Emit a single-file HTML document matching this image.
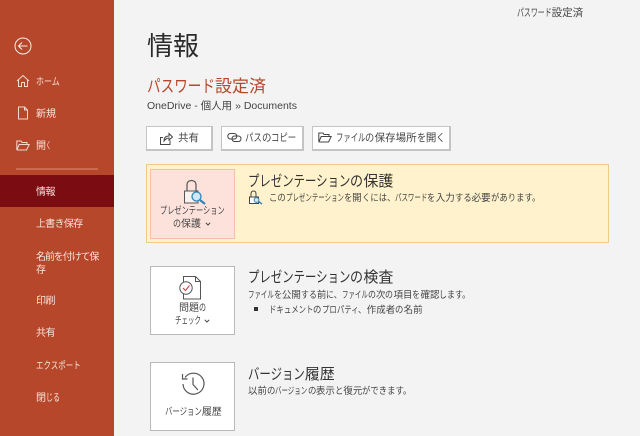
<!DOCTYPE html>
<html lang="ja"><head><meta charset="utf-8"><style>
html,body{margin:0;padding:0}
body{--ks:.68;--gs:.88;width:640px;height:436px;position:relative;overflow:hidden;background:#f3f3f3;font-family:"Liberation Sans","Noto Sans CJK JP",sans-serif;color:#444}
div,svg{position:absolute;box-sizing:border-box}
i{display:inline-block;font-style:normal;transform-origin:0 50%;transform:scaleX(var(--s));margin-right:calc((var(--s) - 1)*var(--n)*1em)}
i.k{--s:var(--ks)}
i.g{--s:var(--gs)}
.t{white-space:nowrap;line-height:1}
.n{color:#f6e3dc;font-size:10px;left:36px;line-height:1;white-space:nowrap}
.b{background:#fff;border:1px solid #c4c4c4;border-bottom-width:2px;border-right-width:2px}
.c{background:#fff;border:1px solid #b9b9b9;left:150px;width:85px;height:69px}
.h{--ks:.76;--gs:.87;left:248px;font-size:15px;color:#333;white-space:nowrap;line-height:1}
.s{font-size:9.5px;color:#444;white-space:nowrap;line-height:1}
</style></head><body>
<div style="left:0;top:0;width:114px;height:436px;background:#b7472a"></div>
<div style="left:0;top:175px;width:114px;height:32px;background:#7b0c12"></div>
<div style="left:16px;top:168px;width:82px;height:2px;background:#cc6a50"></div>
<svg style="left:14px;top:37px" width="18" height="18" viewBox="0 0 18 18" fill="none" stroke="#fbeee9" stroke-width="1"><circle cx="9" cy="9" r="8"/><path d="M13.5 9H4.5M8 5.5L4.5 9L8 12.5"/></svg>
<svg style="left:16px;top:74px" width="14" height="14" viewBox="0 0 14 14" fill="none" stroke="#f3d9d0" stroke-width="1"><path d="M1 7L7 1.5L13 7M2.5 6V12.5H5.5V8.5H8.5V12.5H11.5V6"/></svg>
<svg style="left:17px;top:106px" width="12" height="14" viewBox="0 0 12 14" fill="none" stroke="#f3d9d0" stroke-width="1"><path d="M1.5 1H7.5L10.5 4V13H1.5ZM7.5 1V4H10.5"/></svg>
<svg style="left:16px;top:140px" width="14" height="11" viewBox="0 0 14 11" fill="none" stroke="#f3d9d0" stroke-width="1"><path d="M.8 10V1H5L6 2.5H11V4.5M.8 10H10.5L13.2 4.5H3.2L.8 10"/></svg>
<div class="n" style="top:78px;--ks:.8"><i class="k" style="--n:3">ホーム</i></div>
<div class="n" style="top:110px">新規</div>
<div class="n" style="top:142px;--gs:.5">開<i class="g" style="--n:1">く</i></div>
<div class="n" style="top:188px;letter-spacing:-.5px">情報</div>
<div class="n" style="top:220px;letter-spacing:-.7px">上書き保存</div>
<div class="n" style="top:253px;letter-spacing:-1.1px">名前を付けて保</div>
<div class="n" style="top:266px">存</div>
<div class="n" style="top:297px;letter-spacing:-.5px">印刷</div>
<div class="n" style="top:329px;letter-spacing:-.5px">共有</div>
<div class="n" style="top:362px;--ks:.75"><i class="k" style="--n:6">エクスポート</i></div>
<div class="n" style="top:394px;--gs:.7">閉<i class="g" style="--n:2">じる</i></div>

<div class="t" style="left:517px;top:8px;font-size:10.5px;color:#444;--ks:.66"><i class="k" style="--n:5">パスワード</i>設定済</div>
<div class="t" style="left:147px;top:33px;font-size:26px;color:#2b2b2b">情報</div>
<div class="t" style="left:147px;top:78px;font-size:17px;color:#b7472a;--ks:.8"><i class="k" style="--n:5">パスワード</i>設定済</div>
<div class="t" style="left:147px;top:101px;font-size:10.5px;color:#444">OneDrive - 個人用 » Documents</div>

<div class="b" style="left:146px;top:126px;width:67px;height:25px"></div>
<div class="b" style="left:221px;top:126px;width:83px;height:25px"></div>
<div class="b" style="left:312px;top:126px;width:139px;height:25px"></div>
<svg style="left:159px;top:131px" width="14" height="15" viewBox="0 0 14 15" fill="none" stroke="#444" stroke-width="1"><path d="M4 13.5H1.5V6.5H4M1.5 13.5H11V9.5M5 10C5 6.5 7 5 10 5V2.5L13.5 6L10 9V7C8 7 6.5 8 5 10Z"/></svg>
<svg style="left:227px;top:132px" width="15" height="11" viewBox="0 0 15 11" fill="none" stroke="#444" stroke-width="1"><rect x=".8" y="1.5" width="9" height="5.5" rx="2.7"/><rect x="5" y="4" width="9" height="5.5" rx="2.7"/></svg>
<svg style="left:318px;top:132px" width="14" height="11" viewBox="0 0 14 11" fill="none" stroke="#444" stroke-width="1"><path d="M.8 10V1H5L6 2.5H11V4.5M.8 10H10.5L13.2 4.5H3.2L.8 10"/></svg>
<div class="s" style="left:178px;top:133px;font-size:10.5px">共有</div>
<div class="s" style="left:245px;top:133px;font-size:10.5px;--ks:.8;--gs:.9"><i class="k" style="--n:2">パス</i><i class="g" style="--n:1">の</i><i class="k" style="--n:3">コピー</i></div>
<div class="s" style="left:336px;top:133px;font-size:10.5px;--ks:.7;--gs:.88"><i class="k" style="--n:4">ファイル</i><i class="g" style="--n:1">の</i>保存場所<i class="g" style="--n:1">を</i>開<i class="g" style="--n:1">く</i></div>

<div style="left:146px;top:164px;width:463px;height:79px;background:#fff2cc;border:1px solid #efcb87"></div>
<div style="left:150px;top:169px;width:85px;height:70px;background:#fde2dc;border:1px solid #f6bfa8"></div>
<svg style="left:180px;top:178px" width="30" height="30" viewBox="0 0 30 30" fill="none"><path d="M7 13V7C7 4 9 2.500 11.500 2.500S16 4 16 7V13" stroke="#555" stroke-width="1.2"/><rect x="4.500" y="13" width="13.500" height="12" fill="#f7f2ee" stroke="#555"/><circle cx="16.500" cy="18.500" r="4.500" fill="#cfe8f5" stroke="#2f86bc" stroke-width="1.3"/><path d="M20 22L25 26" stroke="#2f86bc" stroke-width="2.200"/></svg>
<div class="s" style="left:160px;top:207px;font-size:10px;--ks:.72"><i class="k" style="--n:9">プレゼンテーション</i></div>
<div class="s" style="left:173px;top:220px;font-size:10px;--gs:.8"><i class="g" style="--n:1">の</i>保護</div>
<svg style="left:205px;top:222px" width="6" height="4" viewBox="0 0 6 4" fill="none" stroke="#444" stroke-width="1"><path d="M.8 .8L3 3L5.200 .8"/></svg>
<div class="h" style="top:174px"><i class="k" style="--n:9">プレゼンテーション</i><i class="g" style="--n:1">の</i>保護</div>
<svg style="left:248px;top:190px" width="15" height="15" viewBox="0 0 15 15" fill="none"><path d="M3 7V4C3 2 4 1 5.500 1S8 2 8 4V7" stroke="#444"/><rect x="1.500" y="7" width="9" height="6.500" fill="#fff" stroke="#444"/><circle cx="8.500" cy="10" r="2.400" fill="#cfe8f5" stroke="#2f86bc"/><path d="M10.500 11.500L14 14" stroke="#2f86bc" stroke-width="1.500"/></svg>
<div class="s" style="left:269px;top:194px"><i class="g" style="--n:2">この</i><i class="k" style="--n:9">プレゼンテーション</i><i class="g" style="--n:1">を</i>開<i class="g" style="--n:4">くには、</i><i class="k" style="--n:5">パスワード</i><i class="g" style="--n:1">を</i>入力<i class="g" style="--n:2">する</i>必要<i class="g" style="--n:6">があります。</i></div>

<div class="c" style="top:266px"></div>
<svg style="left:178px;top:275px" width="28" height="28" viewBox="0 0 28 28" fill="none"><path d="M5.500 1.500H17.500L22.500 6.500V24H5.500Z" fill="#fff" stroke="#555"/><path d="M17.500 1.500V6.500H22.500" stroke="#555"/><circle cx="8" cy="13" r="6.200" fill="#fff" stroke="#555"/><path d="M5 13L7.500 15.500L11.500 10.500" stroke="#d24a54" stroke-width="1.200"/></svg>
<div class="s" style="left:179px;top:304px;font-size:10px;--gs:.7">問題<i class="g" style="--n:1">の</i></div>
<div class="s" style="left:175px;top:317px;font-size:10px;--ks:.65"><i class="k" style="--n:4">チェック</i></div>
<svg style="left:204px;top:319px" width="6" height="4" viewBox="0 0 6 4" fill="none" stroke="#444" stroke-width="1"><path d="M.8 .8L3 3L5.200 .8"/></svg>
<div class="h" style="top:270px"><i class="k" style="--n:9">プレゼンテーション</i><i class="g" style="--n:1">の</i>検査</div>
<div class="s" style="left:248px;top:291px;--gs:.84"><i class="k" style="--n:4">ファイル</i><i class="g" style="--n:1">を</i>公開<i class="g" style="--n:2">する</i>前<i class="g" style="--n:2">に、</i><i class="k" style="--n:4">ファイル</i><i class="g" style="--n:1">の</i>次<i class="g" style="--n:1">の</i>項目<i class="g" style="--n:1">を</i>確認<i class="g" style="--n:4">します。</i></div>
<div style="left:254px;top:307px;width:4px;height:4px;background:#333"></div>
<div class="s" style="left:269px;top:306px;--ks:.78"><i class="k" style="--n:6">ドキュメント</i><i class="g" style="--n:1">の</i><i class="k" style="--n:5">プロパティ</i><i class="g" style="--n:1">、</i>作成者<i class="g" style="--n:1">の</i>名前</div>

<div class="c" style="top:362px"></div>
<svg style="left:180px;top:371px" width="26" height="26" viewBox="0 0 26 26" fill="none" stroke="#555" stroke-width="1.2"><path d="M5 6.500A10.500 10.500 0 1 1 3 13M2.500 3V8H7.500"/><path d="M13 6.500V13.500L18 19"/></svg>
<div class="s" style="left:165px;top:408px;font-size:10px;--ks:.74"><i class="k" style="--n:5">バージョン</i>履歴</div>
<div class="h" style="top:367px"><i class="k" style="--n:5">バージョン</i>履歴</div>
<div class="s" style="left:248px;top:387px">以前<i class="g" style="--n:1">の</i><i class="k" style="--n:5">バージョン</i><i class="g" style="--n:1">の</i>表示<i class="g" style="--n:1">と</i>復元<i class="g" style="--n:6">ができます。</i></div>
</body></html>
